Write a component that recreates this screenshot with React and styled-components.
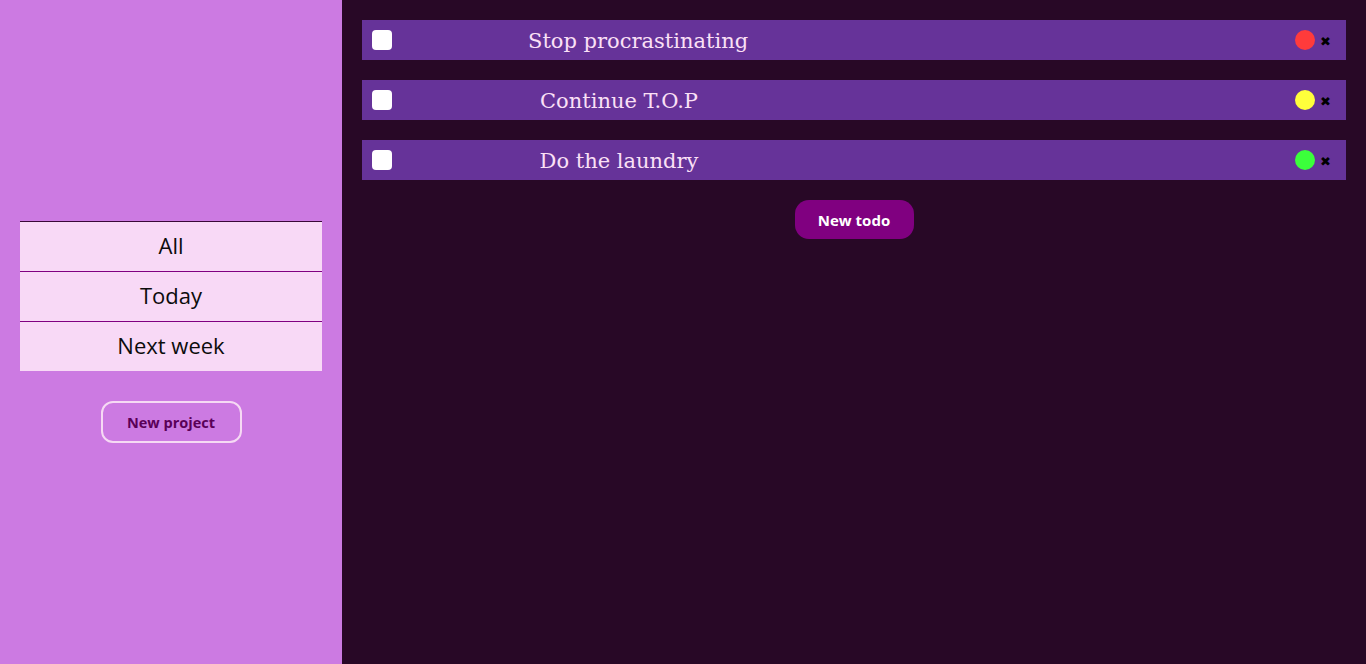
import React from "react";
import styled, { createGlobalStyle } from "styled-components";

const GlobalStyle = createGlobalStyle`
  * {
    box-sizing: border-box;
  }
  body {
    margin: 0;
    font-family: "Open Sans", "Noto Sans", sans-serif;
  }
`;

const todos = [
  { title: "Stop procrastinating", priority: "high" },
  { title: "Continue T.O.P", priority: "medium" },
  { title: "Do the laundry", priority: "low" },
];

const colors = {
  sidebar: "#cc7ae2",
  main: "#280826",
  row: "#663399",
  navItem: "#f8d9f6",
  navBorder: "#800080",
  text: "#fbe0f6",
  high: "#ff3b3b",
  medium: "#ffff3b",
  low: "#3bff3b",
};

export default function App() {
  return (
    <>
      <GlobalStyle />
      <Layout>
        <Sidebar>
          <Nav>
            <NavItem>All</NavItem>
            <NavItem>Today</NavItem>
            <NavItem>Next week</NavItem>
          </Nav>
          <ProjectButton>New project</ProjectButton>
        </Sidebar>
        <Main>
          {todos.map((t) => (
            <TodoRow key={t.title}>
              <Check type="checkbox" />
              <Title>{t.title}</Title>
              <Actions>
                <Priority level={t.priority} />
                <Delete>✖</Delete>
              </Actions>
            </TodoRow>
          ))}
          <TodoButton>New todo</TodoButton>
        </Main>
      </Layout>
    </>
  );
}

const Layout = styled.div`
  display: flex;
  height: 100vh;
`;

const Sidebar = styled.aside`
  width: 342px;
  flex-shrink: 0;
  background-color: ${colors.sidebar};
  padding: 20px;
  display: flex;
  flex-direction: column;
  justify-content: center;
  align-items: center;
  gap: 30px;
`;

const Nav = styled.ul`
  list-style: none;
  margin: 0;
  padding: 0;
  width: 100%;
`;

const NavItem = styled.li`
  height: 50px;
  display: flex;
  align-items: center;
  justify-content: center;
  padding-bottom: 4px;
  background-color: ${colors.navItem};
  border-top: 1px solid ${colors.navBorder};
  font-size: 22px;
  color: #0c0c0c;

  &:first-child {
    border-top-color: #3a0838;
  }
`;

const ProjectButton = styled.button`
  width: 141px;
  height: 42px;
  background: transparent;
  border: 2px solid #f6d9f4;
  border-radius: 12px;
  font-family: inherit;
  font-weight: 700;
  font-size: 14.5px;
  color: #5a0058;
  cursor: pointer;
`;

const Main = styled.main`
  flex: 1;
  background-color: ${colors.main};
  padding: 20px;
  display: flex;
  flex-direction: column;
  align-items: center;
  gap: 20px;
`;

const TodoRow = styled.div`
  width: 100%;
  height: 40px;
  background-color: ${colors.row};
  display: flex;
  align-items: center;
  padding: 0 15px 0 10px;
`;

const Check = styled.input`
  appearance: none;
  width: 20px;
  height: 20px;
  margin: 0;
  background: #fff;
  border-radius: 4px;
`;

const Title = styled.span`
  width: 182px;
  margin-left: 136px;
  padding-top: 2px;
  white-space: nowrap;
  text-align: center;
  font-family: "DejaVu Serif", serif;
  font-size: 21px;
  color: ${colors.text};
`;

const Actions = styled.div`
  margin-left: auto;
  display: flex;
  align-items: center;
  gap: 5px;
`;

const Priority = styled.span`
  width: 20px;
  height: 20px;
  border-radius: 50%;
  background-color: ${(props) => colors[props.level]};
`;

const Delete = styled.span`
  font-family: "DejaVu Sans", sans-serif;
  font-size: 13px;
  color: #000;
  line-height: 1;
  padding-top: 2px;
`;

const TodoButton = styled.button`
  width: 119px;
  height: 39px;
  border: none;
  border-radius: 14px;
  background-color: #800080;
  color: #fff;
  font-family: "Open Sans", sans-serif;
  font-weight: 700;
  font-size: 15px;
  cursor: pointer;
`;
